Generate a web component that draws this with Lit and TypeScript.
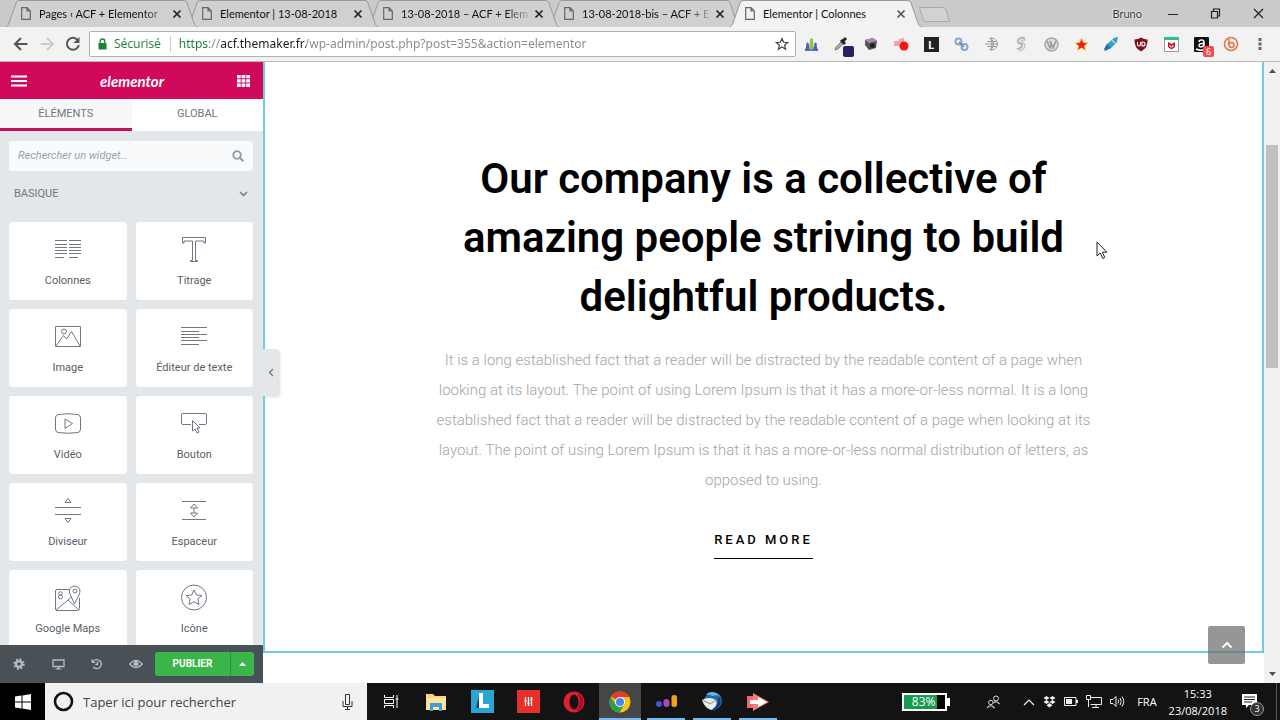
import { LitElement, html, css, svg, nothing, TemplateResult } from "lit";
import { customElement, property } from "lit/decorators.js";
import { classMap } from "lit/directives/class-map.js";

const icon = (w: number, h: number, body: TemplateResult) =>
  html`<svg width=${w} height=${h} viewBox="0 0 ${w} ${h}" fill="none" aria-hidden="true">${body}</svg>`;

const reset = css`
  * { box-sizing: border-box; }
  svg { display: block; flex: none; }
  button { margin: 0; padding: 0; border: 0; background: none; color: inherit; font: inherit; }
  input { margin: 0; border: 0; padding: 0; outline: 0; background: none; min-width: 0; }
  a { color: inherit; text-decoration: none; }
`;

@customElement("browser-tabs")
class BrowserTabs extends LitElement {
  static styles = [reset, css`
    :host { display: flex; height: 27px; padding-left: 5px; background: #cacaca; font: 11px/26px Lato, "Open Sans", sans-serif; color: #111; overflow: hidden; }
    .tab { position: relative; display: flex; align-items: center; flex: 0 1 193px; min-width: 0; margin-right: -12px; padding: 0 15px 0 16px; }
    .shape { position: absolute; inset: 0; width: 100%; height: 27px; }
    .shape path { fill: #d0d0d0; stroke: #999; }
    .active .shape path { fill: #f2f2f2; }
    .t1 { z-index: 5; } .t2 { z-index: 4; } .t3 { z-index: 3; } .t4 { z-index: 2; }
    .active { z-index: 6; margin-right: 0; }
    .page, .close { position: relative; }
    .title { position: relative; flex: 1; min-width: 0; margin: 0 0 0 8px; white-space: nowrap; overflow: hidden; }
    .fade { mask-image: linear-gradient(90deg, #000 104px, transparent 132px); }
    .close { width: 12px; height: 12px; }
    .add { align-self: center; margin-left: -4px; margin-top: 2px; }
    .window { display: flex; align-items: center; margin-left: auto; padding-right: 16px; }
    .user { margin-right: 26px; color: #333; text-shadow: 0 0 2px #fff, 0 0 2px #fff; }
    .window button + button { margin-left: 32px; }
  `];
  render() {
    const tabs = ["Pages ‹ ACF + Elementor", "Elementor | 13-08-2018", "13-08-2018 – ACF + Elem", "13-08-2018-bis – ACF + E", "Elementor | Colonnes"];
    return html`
      ${tabs.map((t, i) => html`<div class=${classMap({ tab: true, ["t" + (i + 1)]: true, active: i === 4 })}>
        <svg class="shape" viewBox="0 0 193 27" preserveAspectRatio="none"><path d="M0 27.5C3 26 3 25 4 23L11 3Q12 .5 14 .5H179Q181 .5 182 3L189 23C190 25 190 26 193 27.5" /></svg>
        <span class="page">${icon(10, 13, svg`<path d="M.7 .7H6L9.3 4V12.3H.7ZM6 .7V4H9.3" stroke="#666" stroke-width="1.2"/>`)}</span>
        <span class=${classMap({ title: true, fade: i !== 1 && i !== 4 })}>${t}</span>
        <button class="close" aria-label="Fermer l'onglet">${icon(12, 12, svg`<path d="M2.5 2.5L9.5 9.5M9.5 2.5L2.5 9.5" stroke=${i === 4 ? "#555" : "#222"} stroke-width="1.7"/>`)}</button>
      </div>`)}
      <button class="add" aria-label="Nouvel onglet">${icon(33, 17, svg`<path d="M1.5 1.5H25Q27 1.5 28 4L31.5 15.5H8Q6 15.5 5 13Z" fill="#d2d2d2" stroke="#aaa"/>`)}</button>
      <div class="window"><span class="user">Bruno</span>
        <button aria-label="Réduire">${icon(10, 10, svg`<path d="M0 5.5H10" stroke="#222"/>`)}</button>
        <button aria-label="Restaurer">${icon(11, 11, svg`<path d="M1.5 3.5H7.5V10H1.5ZM3.5 3.5V1H9.5V8H7.5" stroke="#222" stroke-width="1.2"/>`)}</button>
        <button aria-label="Fermer">${icon(11, 11, svg`<path d="M1 1L10 10M10 1L1 10" stroke="#222" stroke-width="1.2"/>`)}</button>
      </div>`;
  }
}

@customElement("browser-toolbar")
class BrowserToolbar extends LitElement {
  static styles = [reset, css`
    :host { display: flex; align-items: center; height: 34px; padding-left: 13px; background: #f2f2f2; border-bottom: 1px solid #b8b8b8; font: 12px/24px "Open Sans", "Noto Sans", sans-serif; }
    .nav { display: flex; gap: 10px; margin-right: 8px; }
    .box { display: flex; align-items: center; flex: 1; height: 26px; padding: 0 6px 0 7px; border: 1px solid #b0b0b0; border-radius: 2px; background: #fff; }
    .secure { margin: 0 8px 0 6px; padding-right: 9px; line-height: 16px; border-right: 1px solid #ccc; color: #1b8038; }
    .url { flex: 1; height: 22px; font: 12px/22px "Noto Sans", sans-serif; -webkit-text-fill-color: transparent; background: linear-gradient(90deg, #1b8038 29px, #888 29px 41px, #1c1c1c 41px 127px, #888 127px); -webkit-background-clip: text; background-clip: text; }
    .ext { display: flex; }
    .ext button { position: relative; display: grid; place-items: center; width: 30px; height: 24px; }
    .swatch { position: absolute; right: 2px; bottom: -1px; width: 11px; height: 11px; border-radius: 2px; background: #282060; }
    .count { position: absolute; right: 2px; bottom: -1px; width: 11px; height: 11px; border-radius: 2px; background: #f0504c; color: #fff; font-size: 9px; line-height: 11px; }
    .tile { width: 15px; height: 15px; background: #222; color: #fff; font: bold 11px/15px "Open Sans", sans-serif; }
    .dots { width: 28px; display: grid; place-items: center; margin-right: 6px; }
  `];
  render() {
    const ext: [string, TemplateResult][] = [
      ["Statistiques", icon(13, 13, svg`<path d="M0 12L1.500 10L2 5H3L4 10L5 12Z" fill="#4a5ac8" stroke="#4a5ac8"/><path d="M4 11L5 8L5.500 1H7.500L8 8L9 11Z" fill="#8fc43c" stroke="#8fc43c"/><path d="M8 12L9.500 10L10 5H11L11.500 10L13 12Z" fill="#4a5ac8" stroke="#4a5ac8"/><path d="M0 12H13" stroke="#4a5ac8" stroke-width="1.500"/>`)],
      ["Pipette", html`${icon(16, 16, svg`<path d="M2 14L3 11L9 5L11 7L5 13Z" fill="#aaa" stroke="#666" stroke-width=".7"/><path d="M8 4L12 8M10 5L13 2" stroke="#222" stroke-width="3"/>`)}<span class="swatch"></span>`],
      ["Capture", icon(14, 14, svg`<path d="M1 3L9 1L13 4L12 11L5 13L1 8Z" fill="#555"/><path d="M1 3L9 1L13 4L5 6Z" fill="#a58aa8"/><circle cx="8.500" cy="8.500" r="2.500" fill="#222"/>`)],
      ["Enregistreur", icon(16, 16, svg`<path d="M1 5H7V10H1ZM6 3L11 2V7H6Z" fill="#f3a3a3"/><circle cx="11" cy="10" r="4.500" fill="#f01818"/>`)],
      ["L", html`<span class="tile">L</span>`],
      ["Liens", icon(15, 15, svg`<circle cx="4.500" cy="4.500" r="3" stroke="#86a9cb" stroke-width="2"/><circle cx="10.500" cy="10" r="3" stroke="#86a9cb" stroke-width="2"/><path d="M5 5L10 10" stroke="#5e8bb8" stroke-width="1.500"/>`)],
      ["Globe", icon(14, 14, svg`<path d="M5 1.500A6 6 0 1 1 5 12.500M7 1Q12 7 7 13M7 1Q9 7 7 13M3 4.500H12M1 7H13M3 9.500H12" stroke="#999"/>`)],
      ["Sync", icon(14, 16, svg`<path d="M11 2Q5 1 4 5Q4 8 8 8Q9 12 3 13" stroke="#b4b4b4" stroke-width="2"/><path d="M12 4Q8 3 7 6Q11 7 11 10Q10 14 5 15" stroke="#c4c4c4" stroke-width="1.300"/>`)],
      ["WordPress", icon(15, 15, svg`<circle cx="7.500" cy="7.500" r="6.500" fill="#ddd" stroke="#aaa" stroke-width="1.500"/><path d="M3 4L6 11L7.500 7L9 11L12 4M6 4L7.500 8" stroke="#999" stroke-width="1.500"/>`)],
      ["Étoile", icon(15, 15, svg`<path d="M7.500 1L9.400 5.400L14 5.800L10.500 8.900L11.600 13.500L7.500 11L3.400 13.500L4.500 8.900L1 5.800L5.600 5.400Z" fill="#e8201c" stroke="#ffd75a"/>`)],
      ["Fusée", icon(16, 16, svg`<path d="M2 14L4 8L11 2L15 1L14 6L8 12Z" fill="#2c9fd8"/><path d="M4 8L8 12L2 15L1 13Z" fill="#2d6a9e"/><path d="M9 4L12 7" stroke="#e8d75a" stroke-width="1.500"/>`)],
      ["uBlock", icon(14, 15, svg`<path d="M7 .5Q10 2.500 13.500 2.500Q14 11 7 14.500Q0 11 .5 2.500Q4 2.500 7 .5Z" fill="#800f14"/><path d="M3.500 5V7.500Q3.500 9 5 9T6.500 7.500V5M8 5H9Q11 5 11 7T9 9H8Z" stroke="#fff" stroke-width="1.100"/>`)],
      ["McAfee", icon(15, 15, svg`<path d="M.5 .5H14.500V14.500H.5Z" fill="#fff" stroke="#999"/><path d="M0 1.500H15" stroke="#2cc08b" stroke-width="3"/><path d="M4 5L7.500 7L11 5V10L7.500 12.500L4 10Z" fill="#c01830"/><path d="M6 8V9.500L7.500 10L9 9.500V8" stroke="#fff"/>`)],
      ["Amazon", html`${icon(15, 15, svg`<rect width="15" height="15" rx="1" fill="#111"/><path d="M5 5Q5 3 7.500 3T10 5V9.500M10 6.500H8Q5 6.500 5 8.300Q5 10 7 10T10 7.500M2 12Q7 14.500 12 12" stroke="#fff" stroke-width="1.500"/>`)}<span class="count">6</span>`],
      ["Bitly", icon(16, 16, svg`<circle cx="8" cy="8" r="6.500" stroke="#e67444" stroke-width="1.500"/><path d="M6 3V9" stroke="#e67444" stroke-width="1.500"/><circle cx="8.500" cy="9" r="2.500" stroke="#e67444" stroke-width="1.500"/>`)],
    ];
    return html`
      <div class="nav">
        <button aria-label="Retour">${icon(16, 16, svg`<path d="M14.500 8H2.500M8 2L2 8L8 14" stroke="#555" stroke-width="2"/>`)}</button>
        <button aria-label="Suivant">${icon(16, 16, svg`<path d="M1.500 8H13.500M8 2L14 8L8 14" stroke="#ccc" stroke-width="2"/>`)}</button>
        <button aria-label="Actualiser">${icon(16, 16, svg`<path d="M12.600 4A6 6 0 1 0 13.800 9" stroke="#555" stroke-width="2"/><path d="M14.500 1V7H8.500Z" fill="#555"/>`)}</button>
      </div>
      <div class="box">
        ${icon(11, 12, svg`<path d="M1.500 5H9.500V11.500H1.500Z" fill="#1b8038"/><path d="M3.200 5V3.300Q3.200 1 5.500 1T7.800 3.300V5" stroke="#1b8038" stroke-width="1.300"/>`)}
        <span class="secure">Sécurisé</span>
        <input class="url" aria-label="Adresse" value="https://acf.themaker.fr/wp-admin/post.php?post=355&action=elementor" />
        <button aria-label="Favori">${icon(14, 14, svg`<path d="M7 1.500L8.600 5.300L12.700 5.600L9.600 8.200L10.600 12.200L7 10L3.400 12.200L4.400 8.200L1.300 5.600L5.400 5.300Z" stroke="#444" stroke-width="1.200"/>`)}</button>
      </div>
      <div class="ext">${ext.map(([n, g]) => html`<button aria-label=${n}>${g}</button>`)}</div>
      <button class="dots" aria-label="Menu">${icon(4, 14, svg`<path d="M.5 1H3.500V4H.5ZM.5 5.500H3.500V8.500H.5ZM.5 10H3.500V13H.5Z" fill="#666"/>`)}</button>`;
  }
}

@customElement("widget-card")
class WidgetCard extends LitElement {
  @property() label = "";
  @property() glyph = "";
  static styles = [reset, css`
    :host { display: block; }
    .card { display: flex; flex-direction: column; align-items: center; width: 100%; height: 78px; padding-top: 12px; border-radius: 3px; background: #fff; color: #556068; font: 11px/16px Roboto, sans-serif; box-shadow: 0 0 1px #d8dde0; }
    .label { margin-top: 9px; }
    svg { stroke: #6d7882; }
  `];
  shapes(): Record<string, TemplateResult> {
    return {
      columns: svg`<path d="M3 6.500H15M3 10.500H15M3 13.500H15M3 16.500H15M3 19.500H15M3 23.500H12M17 6.500H29M17 10.500H29M17 13.500H29M17 16.500H29M17 19.500H29M17 23.500H26"/>`,
      title: svg`<path d="M4.500 3.500H27.500V9H26V7H17.500V26.500H19.500V27.500H12.500V26.500H14.500V7H6V9H4.500Z"/>`,
      image: svg`<path d="M3.500 5.500H28.500V25.500H3.500ZM4 25L11.500 14.500L14.500 18L19.500 10.500L28 25"/><circle cx="12" cy="10.500" r="2.500"/>`,
      text: svg`<path d="M3 6.500H29M3 10.500H21M3 13.500H29M3 16.500H21M3 19.500H29M3 23.500H21"/>`,
      video: svg`<path d="M6 6.500Q16 5 26 6.500Q28.500 7 28.500 10V21Q28.500 24 26 24.500Q16 26 6 24.500Q3.500 24 3.500 21V10Q3.500 7 6 6.500ZM13 11L20.500 15.500L13 20.500Z"/>`,
      button: svg`<path d="M13 16.500H5Q3.500 16.500 3.500 15V7Q3.500 5.500 5 5.500H27Q28.500 5.500 28.500 7V15Q28.500 16.500 27 16.500H21M14.500 12.500V23L17 21L19 25L21 24L19 20H22Z"/>`,
      divider: svg`<path d="M3 12.500H29M3 19.500H29M13 7.500L16 3.500L19 7.500ZM13 23.500L16 27.500L19 23.500Z"/>`,
      spacer: svg`<path d="M4 6.500H28M4 24.500H28M12.500 13L16 9L19.500 13ZM12.500 18L16 22L19.500 18ZM16 13V18"/>`,
      maps: svg`<path d="M17 7.500H5Q3.500 7.500 3.500 9V27Q3.500 28.500 5 28.500H25.500Q27.500 28.500 27.500 26.500V16M4 28L16 18L27 28M16 18L19.500 15M22.500 22L18 12Q16.500 9 18 6.500Q20 4 23 4Q27 4.500 28 8Q28 10.500 27 13Z"/><circle cx="23" cy="9" r="2"/><circle cx="8.500" cy="11.500" r="1.800"/><circle cx="8.500" cy="15" r="2"/>`,
      star: svg`<circle cx="16" cy="15.500" r="12.500"/><path d="M16 8L18.400 13L24 13.500L19.800 17L21 22.500L16 19.700L11 22.500L12.200 17L8 13.500L13.600 13Z"/>`,
    };
  }
  render() {
    return html`<button class="card">${icon(32, 30, this.shapes()[this.glyph])}<span class="label">${this.label}</span></button>`;
  }
}

@customElement("editor-panel")
class EditorPanel extends LitElement {
  static styles = [reset, css`
    :host { position: relative; z-index: 2; display: flex; flex-direction: column; flex: none; width: 263px; background: #e4e7ea; font: 11px/16px Roboto, sans-serif; color: #6d7882; }
    .head { display: flex; align-items: center; justify-content: space-between; flex: none; height: 37px; padding: 0 13px 0 11px; background: #d1095b; color: #fff; }
    .brand { font: italic bold 15px/20px Lato, sans-serif; }
    .tabs { display: grid; grid-template-columns: 1fr 1fr; flex: none; height: 32px; background: #fff; }
    .tabs button { border-bottom: 3px solid transparent; }
    .tabs .on { background: #f8f8f9; border-color: #c4105a; }
    .body { flex: 1; min-height: 0; overflow: hidden; padding: 10px 10px 0 9px; }
    .search { display: flex; align-items: center; height: 30px; padding: 0 9px; border-radius: 3px; background: #f8fafb; }
    .search input { flex: 1; font: italic 11px/16px Roboto, sans-serif; color: #777; }
    .search input::placeholder { color: #98a1a8; opacity: 1; }
    .cat { display: flex; justify-content: space-between; align-items: center; width: 100%; padding: 15px 5px 20px; }
    .grid { display: grid; grid-template-columns: 1fr 1fr; gap: 9px; }
    .foot { display: flex; align-items: center; flex: none; height: 38px; padding: 0 9px 0 0; background: #495157; color: #b4bcc2; }
    .tools { display: flex; flex: 1; }
    .tools button { flex: 1; display: grid; place-items: center; }
    .publish { height: 24px; width: 75px; background: #39b54a; color: #fff; font-size: 10px; font-weight: 700; border-radius: 3px 0 0 3px; }
    .more { display: grid; place-items: center; height: 24px; width: 24px; background: #39b54a; border-left: 1px solid #2c8f3a; border-radius: 0 3px 3px 0; }
    .handle { position: absolute; left: 100%; top: 287px; display: grid; place-items: center; width: 15px; height: 47px; background: #e4e7ea; border-radius: 0 3px 3px 0; box-shadow: 2px 1px 3px #0002; }
  `];
  render() {
    const items = [["Colonnes", "columns"], ["Titrage", "title"], ["Image", "image"], ["Éditeur de texte", "text"], ["Vidéo", "video"], ["Bouton", "button"], ["Diviseur", "divider"], ["Espaceur", "spacer"], ["Google Maps", "maps"], ["Icône", "star"]];
    return html`
      <header class="head">
        <button aria-label="Menu">${icon(16, 12, svg`<path d="M0 1.500H16M0 6H16M0 10.500H16" stroke="#fff" stroke-width="2"/>`)}</button>
        <span class="brand">elementor</span>
        <button aria-label="Widgets">${icon(13, 12, svg`<path d="M0 0H3.700V3.300H0ZM4.600 0H8.300V3.300H4.600ZM9.200 0H13V3.300H9.200ZM0 4.300H3.700V7.600H0ZM4.600 4.300H8.300V7.600H4.600ZM9.200 4.300H13V7.600H9.200ZM0 8.600H3.700V12H0ZM4.600 8.600H8.300V12H4.600ZM9.200 8.600H13V12H9.200Z" fill="#fff"/>`)}</button>
      </header>
      <div class="tabs"><button class="on">ÉLÉMENTS</button><button>GLOBAL</button></div>
      <div class="body">
        <label class="search"><input type="text" aria-label="Rechercher un widget" placeholder="Rechercher un widget…" />${icon(12, 12, svg`<circle cx="5" cy="5" r="3.800" stroke="#8f9aa1" stroke-width="1.800"/><path d="M8 8L11.300 11.300" stroke="#8f9aa1" stroke-width="2"/>`)}</label>
        <button class="cat"><span>BASIQUE</span>${icon(9, 6, svg`<path d="M1 1L4.500 4.500L8 1" stroke="#6d7882" stroke-width="1.500"/>`)}</button>
        <div class="grid">${items.map(([l, g]) => html`<widget-card .label=${l} .glyph=${g}></widget-card>`)}</div>
      </div>
      <footer class="foot">
        <div class="tools">
          <button aria-label="Réglages">${icon(12, 12, svg`<circle cx="6" cy="6" r="3" stroke="#b4bcc2" stroke-width="2.400"/><circle cx="6" cy="6" r="4.900" stroke="#b4bcc2" stroke-width="1.600" stroke-dasharray="2 1.850"/>`)}</button>
          <button aria-label="Mode responsive">${icon(13, 11, svg`<path d="M1 1H12V7.500H1Z" stroke="#b4bcc2" stroke-width="1.300"/><path d="M5.500 8H7.500V9.500H9.500V10.500H3.500V9.500H5.500Z" fill="#b4bcc2"/>`)}</button>
          <button aria-label="Historique">${icon(12, 12, svg`<path d="M2.500 3A4.500 4.500 0 1 1 2.200 8.800M6.500 3.500V6.500H4.300" stroke="#b4bcc2" stroke-width="1.400"/><path d="M.5 .8V5H4.700Z" fill="#b4bcc2"/>`)}</button>
          <button aria-label="Aperçu">${icon(14, 10, svg`<path d="M.8 5Q7-2.200 13.200 5Q7 12.200 .8 5Z" stroke="#b4bcc2" stroke-width="1.200"/><circle cx="7" cy="4.700" r="2.600" fill="#b4bcc2"/>`)}</button>
        </div>
        <button class="publish">PUBLIER</button>
        <button class="more" aria-label="Options">${icon(7, 4, svg`<path d="M3.500 0L7 4H0Z" fill="#fff"/>`)}</button>
      </footer>
      <button class="handle" aria-label="Masquer le panneau">${icon(6, 9, svg`<path d="M5 1L1.500 4.500L5 8" stroke="#6d7882" stroke-width="1.300"/>`)}</button>`;
  }
}

@customElement("page-preview")
class PagePreview extends LitElement {
  static styles = [reset, css`
    :host { position: relative; display: flex; flex: 1; min-width: 0; overflow: hidden; background: #fff; font-family: Roboto, sans-serif; text-align: center; }
    .page { flex: 1; min-width: 0; }
    .section { padding: 87px 24px 92px; border: 2px solid #71cbe4; border-top: 0; }
    .inner { max-width: 660px; margin: 0 auto; }
    h1 { margin: 0; font-size: 42px; line-height: 59px; font-weight: 600; color: #000; }
    p { margin: 19px 0 34px; font-size: 15px; line-height: 30px; font-weight: 300; color: #a4a4a4; }
    .more { display: inline-block; padding-bottom: 10px; border-bottom: 1px solid #000; font-size: 13px; line-height: 16px; font-weight: 500; letter-spacing: 3px; color: #000; }
    .scroll { display: flex; flex-direction: column; align-items: center; width: 16px; padding: 7px 0; background: #f1f1f1; }
    .thumb { width: 12px; height: 223px; margin-top: 72px; background: #c1c1c1; }
    .down { margin-top: auto; }
    .top { position: absolute; right: 35px; bottom: 19px; display: grid; place-items: center; width: 37px; height: 38px; border-radius: 2px; background: rgba(110, 110, 110, .72); }
    .cursor { position: absolute; left: 833px; top: 179px; }
  `];
  render() {
    return html`
      <div class="page"><section class="section"><div class="inner">
        <h1>Our company is a collective of amazing people striving to build delightful products.</h1>
        <p>It is a long established fact that a reader will be distracted by the readable content of a page when looking at its layout. The point of using Lorem Ipsum is that it has a more-or-less normal. It is a long established fact that a reader will be distracted by the readable content of a page when looking at its layout. The point of using Lorem Ipsum is that it has a more-or-less normal distribution of letters, as opposed to using.</p>
        <a class="more" href="#">READ MORE</a>
      </div></section></div>
      <div class="scroll">${icon(7, 4, svg`<path d="M3.500 0L7 4H0Z" fill="#505050"/>`)}<div class="thumb"></div><span class="down">${icon(7, 4, svg`<path d="M3.500 4L7 0H0Z" fill="#505050"/>`)}</span></div>
      <button class="top" aria-label="Haut de page">${icon(12, 8, svg`<path d="M1.500 6.500L6 2L10.500 6.500" stroke="#fff" stroke-width="2"/>`)}</button>
      <span class="cursor">${icon(12, 19, svg`<path d="M1 1V15L4.200 12L6.800 17.500L8.800 16.500L6.300 11.200H10.800Z" fill="#fff" stroke="#222"/>`)}</span>`;
  }
}

@customElement("task-bar")
class TaskBar extends LitElement {
  static styles = [reset, css`
    :host { display: flex; align-items: stretch; height: 37px; background: #131313; color: #fff; font: 12px/16px "Open Sans", "Noto Sans", sans-serif; }
    .start { display: grid; place-items: center; width: 45px; background: #000; }
    .find { display: flex; align-items: center; width: 322px; padding: 0 14px 0 8px; background: #f1f1f1; }
    .find input { flex: 1; margin-left: 9px; font: 13px/20px "Open Sans", "Noto Sans", sans-serif; }
    .find input::placeholder { color: #444; opacity: 1; }
    .apps { display: flex; }
    .apps button { display: grid; place-items: center; width: 46px; }
    .apps .run { background: linear-gradient(#76b9ed, #76b9ed) bottom / 38px 2px no-repeat; }
    .apps .on { background: linear-gradient(#76b9ed, #76b9ed) bottom / 42px 2px no-repeat, linear-gradient(#464646, #464646) center / 42px 100% no-repeat; }
    .tray { display: flex; align-items: center; margin-left: auto; }
    .power { width: 45px; height: 18px; border: 2px solid #fff; background: linear-gradient(90deg, #169a50 33px, #000 33px); line-height: 14px; text-align: center; padding-right: 2px; }
    .nub { width: 3px; height: 8px; margin-right: 36px; background: #fff; }
    .sys { display: flex; align-items: center; gap: 8px; margin-left: 22px; }
    .lang { margin: 0 12px 0 12px; font-size: 11px; }
    .clock { font-size: 11px; text-align: center; line-height: 17px; }
    .note { position: relative; margin: 0 19px 0 15px; }
    .num { position: absolute; left: 8px; top: 8px; width: 14px; height: 14px; border: 1px solid #999; border-radius: 7px; background: #333; font-size: 9px; line-height: 12px; text-align: center; }
    .desk { width: 4px; align-self: stretch; border-left: 1px solid #555; }
  `];
  render() {
    const apps: [string, TemplateResult, string][] = [
      ["Affichage des tâches", icon(17, 15, svg`<path d="M2.500 1V3.500H11.500V1M2.500 14V11.500H11.500V14M2.500 5.500H11.500V9.500H2.500ZM15 1V14M13.500 5H16.500" stroke="#fff"/>`), ""],
      ["Explorateur", icon(20, 18, svg`<path d="M0 1H7L9 3H20V17H0Z" fill="#f5d67b"/><path d="M1 5H20V17H0Z" fill="#fce49a"/><path d="M4 10H16V18H13V14H7V18H4Z" fill="#3aa0d6"/>`), ""],
      ["L", icon(23, 23, svg`<rect width="23" height="23" fill="#29a5d4"/><path d="M8 4V18H5L8 6Z" fill="#16425f"/><path d="M8 3H12V14H18V18H8Z" fill="#fff"/>`), ""],
      ["Mixeur", icon(23, 23, svg`<rect width="23" height="23" fill="#e8302a"/><path d="M8.500 7V16M11.500 7V16M14.500 7V16" stroke="#fff" stroke-width="1.300"/><path d="M7.500 10.500H9.500M10.500 13H12.500M13.500 9.500H15.500" stroke="#fff" stroke-width="1.300"/>`), ""],
      ["Opera", icon(22, 22, svg`<ellipse cx="11" cy="11" rx="10.500" ry="10.500" fill="#e02030"/><ellipse cx="11" cy="11" rx="4.500" ry="7.500" fill="#131313"/><path d="M14 2Q22 5 20 14Q18 20 13 20Q20 11 14 2Z" fill="#a81020"/>`), ""],
      ["Chrome", icon(22, 22, svg`<circle cx="11" cy="11" r="10.500" fill="#fbc116"/><path d="M11 11L2 5.500A10.500 10.500 0 0 1 20.300 6H11Z" fill="#e33b2e"/><path d="M1.900 5.700A10.500 10.500 0 0 0 10.500 21.500L15 14L6.500 13Z" fill="#2da04d"/><circle cx="11" cy="11" r="5" fill="#fff"/><circle cx="11" cy="11" r="4" fill="#4583f0"/>`), "on"],
      ["Stats", icon(23, 14, svg`<circle cx="4" cy="9" r="3" fill="#4053d8"/><rect x="8.500" y="4" width="6" height="8" rx="3" fill="#a84ab8"/><rect x="16.500" y="0" width="5.500" height="12" rx="2.500" fill="#f0a21c"/>`), "run"],
      ["Thunderbird", icon(22, 21, svg`<circle cx="12" cy="10" r="9" fill="#2468a8"/><path d="M5 3Q13-2 20 6Q18 3 12 5Z" fill="#64b5e8"/><path d="M1 9Q8 5 15 9Q17 15 11 19Q4 18 1 9Z" fill="#eceef0"/><path d="M2 9L9 13L15 9" stroke="#888"/><path d="M18 7Q20 15 12 19" stroke="#133e74" stroke-width="2.500"/>`), "run"],
      ["Enregistreur", icon(24, 20, svg`<path d="M1 4H9V16H1Z" fill="#f06868"/><path d="M7 1L23 10L7 19Z" fill="#ee8080"/><path d="M4 8H12V5L21 10L12 15V12H4Z" fill="#fff"/>`), "run"],
    ];
    return html`
      <button class="start" aria-label="Démarrer">${icon(16, 16, svg`<path d="M0 2.500L6.500 1.500V7.500H0ZM7.500 1.400L16 0V7.500H7.500ZM0 8.500H6.500V14.500L0 13.500ZM7.500 8.500H16V16L7.500 14.600Z" fill="#fff"/>`)}</button>
      <label class="find">${icon(21, 21, svg`<circle cx="10.500" cy="10.500" r="8.500" stroke="#111" stroke-width="2.600"/>`)}<input type="text" aria-label="Rechercher" placeholder="Taper ici pour rechercher" />${icon(11, 16, svg`<path d="M3.500 .5H7.500V10.500H3.500ZM1 7V12.500H10V7M5.500 12.500V15.500M3 15.500H8" stroke="#333"/>`)}</label>
      <nav class="apps">${apps.map(([n, g, c]) => html`<button class=${c || nothing} aria-label=${n}>${g}</button>`)}</nav>
      <div class="tray">
        <span class="power">83%</span><span class="nub"></span>
        ${icon(15, 14, svg`<circle cx="10" cy="3.500" r="2.500" stroke="#ddd"/><path d="M7.500 8Q10 5 13.500 9M1 13Q4.500 8.500 8.500 13" stroke="#ddd" stroke-width="1.200"/><circle cx="4.800" cy="7.500" r="2.200" stroke="#ddd"/>`)}
        <div class="sys">
          ${icon(12, 8, svg`<path d="M1 7L6 2L11 7" stroke="#eee" stroke-width="1.200"/>`)}
          ${icon(13, 12, svg`<path d="M3.500 0L6.500 2L3.500 4L.5 2ZM9.500 0L12.500 2L9.500 4L6.500 2ZM3.500 4L6.500 6L3.500 8L.5 6ZM9.500 4L12.500 6L9.500 8L6.500 6ZM6.500 7L9.500 9.200L6.500 11.500L3.500 9.200Z" fill="#eee"/>`)}
          ${icon(14, 9, svg`<path d="M.5 .5H12V8.500H.5Z" stroke="#eee"/><path d="M2 2H8V7H2ZM12 3H14V6H12Z" fill="#eee"/>`)}
          ${icon(16, 13, svg`<path d="M4.500 2.500H15.500V9.500H4.500M10 9.500V12M6 12.500H13M.5 .5H4.500V4.500H.5ZM2.500 4.500V12" stroke="#eee"/>`)}
          ${icon(15, 13, svg`<path d="M.5 4.500H3L6 1.500V11.500L3 8.500H.5ZM8 4.500Q9.500 6.500 8 8.500M10 3Q12.500 6.500 10 10M12 1.500Q15.500 6.500 12 11.500" stroke="#eee"/>`)}
        </div>
        <span class="lang">FRA</span>
        <div class="clock"><div>15:33</div><div>23/08/2018</div></div>
        <div class="note">${icon(15, 15, svg`<path d="M0 0H15V11H7L4 14V11H0Z" fill="#fff"/><path d="M2 3H13M2 5.500H13M2 8H10" stroke="#222"/>`)}<span class="num">3</span></div>
        <span class="desk"></span>
      </div>`;
  }
}

@customElement("app-root")
class AppRoot extends LitElement {
  static styles = css`
    :host { display: flex; flex-direction: column; height: 100vh; overflow: hidden; }
    browser-tabs, browser-toolbar, task-bar { flex: none; }
    .main { display: flex; flex: 1; min-height: 0; }
  `;
  render() {
    return html`<browser-tabs></browser-tabs><browser-toolbar></browser-toolbar>
      <main class="main"><editor-panel></editor-panel><page-preview></page-preview></main>
      <task-bar></task-bar>`;
  }
}
